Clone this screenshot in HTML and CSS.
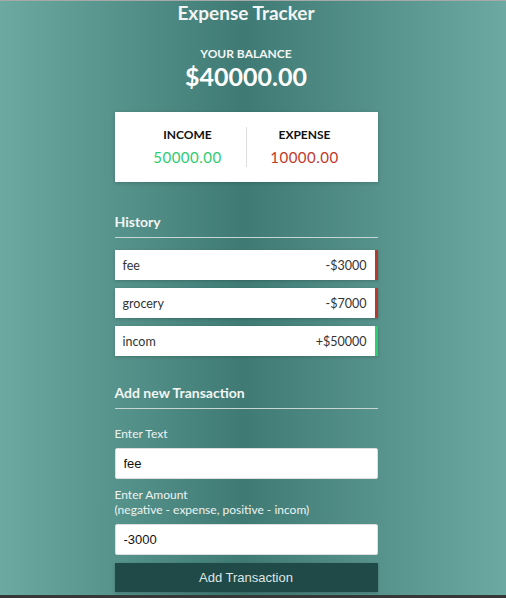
FILE: index.html
```html
<!DOCTYPE html>
<html>
<head>
<meta charset="utf-8">
<link rel="stylesheet" href="styles.css">
</head>
<body>
<div class="page">
  <h2 class="title">Expense Tracker</h2>
  <div class="container">
    <h4 class="balance-label">YOUR BALANCE</h4>
    <h1 class="balance">$40000.00</h1>
    <div class="inc-exp">
      <div class="col">
        <h4>INCOME</h4>
        <p class="money plus">50000.00</p>
      </div>
      <div class="col">
        <h4>EXPENSE</h4>
        <p class="money minus">10000.00</p>
      </div>
    </div>
    <h3 class="section">History</h3>
    <ul class="list">
      <li class="minus"><span>fee</span><span>-$3000</span></li>
      <li class="minus"><span>grocery</span><span>-$7000</span></li>
      <li class="plus"><span>incom</span><span>+$50000</span></li>
    </ul>
    <h3 class="section add">Add new Transaction</h3>
    <form class="form">
      <div class="control">
        <label>Enter Text</label>
        <input type="text" value="fee">
      </div>
      <div class="control">
        <label>Enter Amount<br>(negative - expense, positive - incom)</label>
        <input type="text" value="-3000">
      </div>
      <button type="button" class="btn">Add Transaction</button>
    </form>
  </div>
</div>
</body>
</html>
```
FILE: styles.css
```css
html {
  background: #343837;
  margin: 0;
}
body {
  margin: 0;
  height: 594px;
  border-top: 1px solid #a3aaa8;
  background: linear-gradient(to right, #6ba9a1 0%, #3f7b74 48%, #6ca9a2 100%);
  font-family: Lato, "Open Sans", sans-serif;
  color: #fff;
  overflow: hidden;
}
.page {
  width: 492px;
  display: flex;
  flex-direction: column;
  align-items: center;
}
.title {
  margin: 1px 0 0;
  font-size: 19px;
  font-weight: 700;
  line-height: 22px;
  color: #f2f5f4;
}
.container {
  width: 263px;
}
.balance-label {
  margin: 22px 0 0;
  text-align: center;
  font-size: 12px;
  font-weight: 700;
  line-height: 16px;
  color: #f2f5f4;
}
.balance {
  margin: 0;
  text-align: center;
  font-size: 25px;
  font-weight: 700;
  line-height: 29px;
  color: #fff;
}
.inc-exp {
  margin-top: 21px;
  background: #fff;
  height: 70px;
  padding: 0 15px;
  box-shadow: 0 1px 4px rgba(0, 0, 0, 0.2);
  display: flex;
  align-items: center;
}
.col {
  flex: 1;
  text-align: center;
}
.col:first-child {
  border-right: 1px solid #dedede;
}
.col h4 {
  margin: 0;
  font-size: 12px;
  font-weight: 700;
  line-height: 16px;
  color: #111;
}
.money {
  margin: 4px 0 0;
  font-size: 15px;
  line-height: 20px;
  letter-spacing: 0.5px;
}
.money.plus { color: #2ecc71; }
.money.minus { color: #c0392b; }
.section {
  margin: 31px 0 0;
  padding-bottom: 6px;
  border-bottom: 1px solid #c6d6d3;
  font-size: 14px;
  font-weight: 700;
  line-height: 18px;
  color: #f2f5f4;
}
.section.add {
  margin-top: 28px;
}
.list {
  list-style: none;
  margin: 12px 0 0;
  padding: 0;
  display: flex;
  flex-direction: column;
  gap: 8px;
}
.list li {
  background: #fff;
  height: 30px;
  display: flex;
  align-items: center;
  justify-content: space-between;
  padding: 0 8px 0 8px;
  box-shadow: 0 1px 3px rgba(0, 0, 0, 0.2);
  font-size: 12.5px;
  color: #333;
}
.list li.minus { border-right: 3px solid #b33a2c; }
.list li.plus { border-right: 3px solid #2ecc71; }
.form {
  margin-top: 17px;
  display: flex;
  flex-direction: column;
}
.control {
  display: flex;
  flex-direction: column;
  margin-bottom: 8px;
}
.control label {
  font-size: 12px;
  line-height: 15px;
  color: #eef3f2;
  margin-bottom: 7px;
}
.control input {
  height: 31px;
  box-sizing: border-box;
  border: 1px solid #dedede;
  border-radius: 2px;
  padding: 0 8px;
  font-family: "Liberation Sans", Arial, sans-serif;
  font-size: 13px;
  color: #111;
  background: #fff;
  outline: none;
}
.btn {
  height: 29px;
  border: none;
  background: #1f4a47;
  color: #dfe6e5;
  font-family: "Liberation Sans", Arial, sans-serif;
  font-size: 13px;
  cursor: pointer;
  box-shadow: 0 1px 3px rgba(0, 0, 0, 0.2);
}
```
